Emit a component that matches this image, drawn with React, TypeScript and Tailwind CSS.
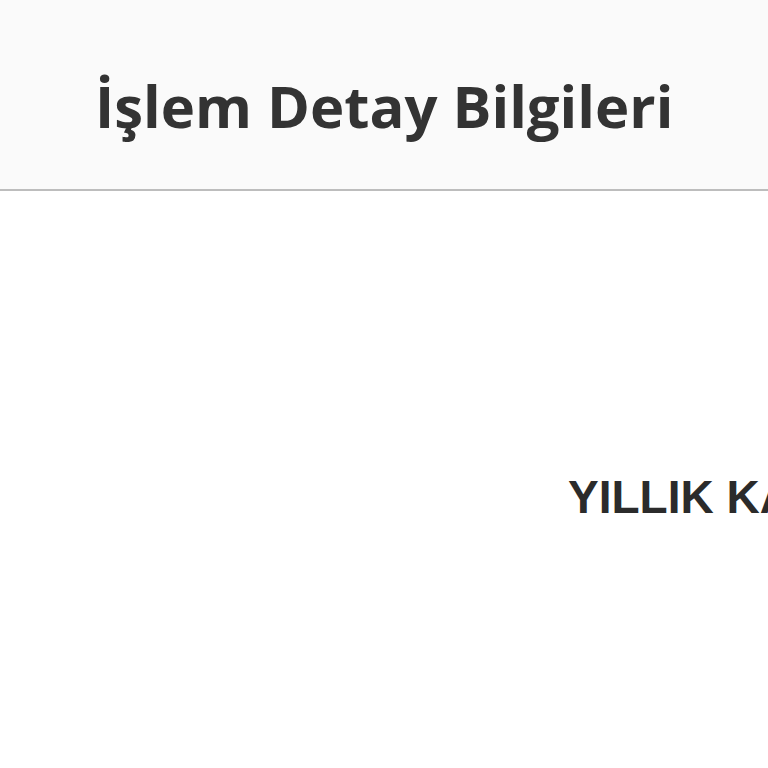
export default function App() {
  return (
    <div className="w-[768px] h-[768px] overflow-hidden bg-white">
      <header className="h-[191px] bg-[#fafafa] border-b-2 border-[#bdbdbd] flex items-start pl-[95px] pt-[77px]">
        <h1 className="text-[58px] leading-none font-bold text-[#333] font-['Open_Sans',sans-serif] whitespace-nowrap">
          İşlem Detay Bilgileri
        </h1>
      </header>
      <section className="pt-[283px] pl-[568px] whitespace-nowrap overflow-hidden">
        <h2 className="text-[46px] leading-none font-bold text-[#2b2b2b] font-['Liberation_Sans',Arial,sans-serif]">
          YILLIK KAMPANYA DETAYLARI
        </h2>
      </section>
    </div>
  )
}
